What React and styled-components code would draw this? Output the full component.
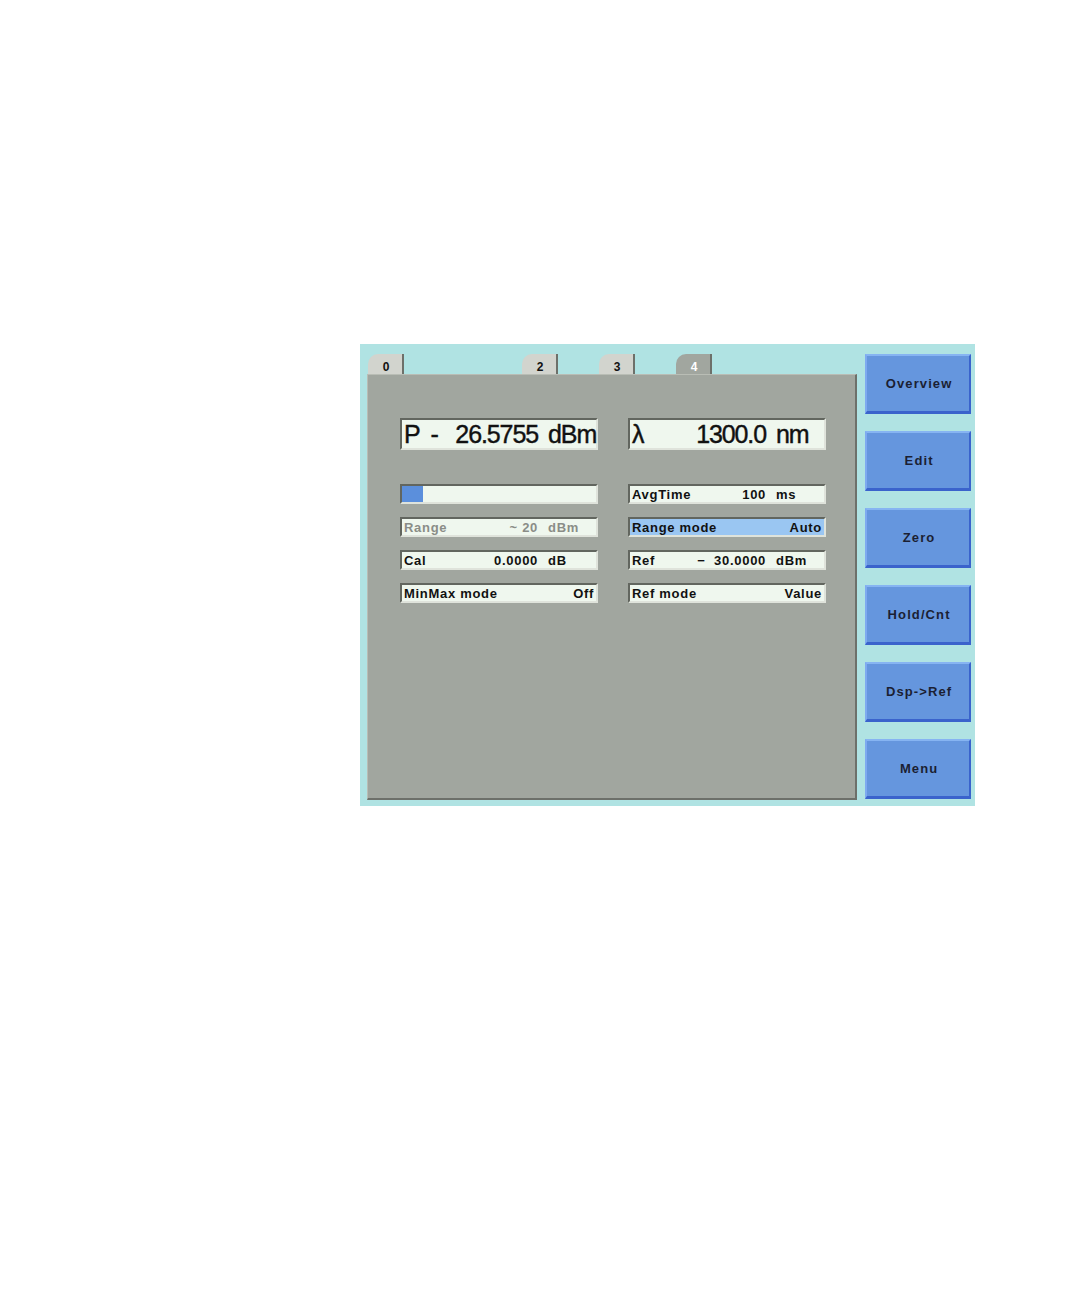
import React from 'react'
import styled, { createGlobalStyle } from 'styled-components'

const Global = createGlobalStyle`
    body {
        margin: 0;
        background: #ffffff;
        font-family: "Liberation Sans", Arial, sans-serif;
    }
`

const Screen = styled.div`
    margin: 344px 0 0 360px;
    width: 615px;
    height: 462px;
    box-sizing: border-box;
    padding: 10px 4px 6px 7px;
    background: #b0e3e3;
    display: flex;
    gap: 8px;
`
const Main = styled.div`
    width: 491px;
    display: flex;
    flex-direction: column;
`
const Tabs = styled.div`
    height: 20px;
    display: flex;
    gap: 41px;
    padding-left: 1px;
`
const Tab = styled.div`
    width: 36px;
    height: 20px;
    box-sizing: border-box;
    border-right: 2px solid #6d706a;
    border-top-left-radius: 10px;
    background: ${p => (p.$active ? '#a1a69f' : '#d2d4ce')};
    color: ${p => (p.$active ? '#ffffff' : '#111111')};
    visibility: ${p => (p.$hidden ? 'hidden' : 'visible')};
    font-size: 12px;
    font-weight: bold;
    display: flex;
    justify-content: center;
    align-items: center;
    padding: 6px 0 0 2px;
`
const Panel = styled.div`
    flex: 1;
    box-sizing: border-box;
    background: #a1a69f;
    border-style: solid;
    border-width: 1px 2px 2px 1px;
    border-color: #b9bdb5 #6d706a #6d706a #b9bdb5;
    padding: 43px 0 0 32px;
`
const Grid = styled.div`
    display: grid;
    grid-template-columns: 198px 198px;
    column-gap: 30px;
    row-gap: 13px;
    & + & {
        margin-top: 34px;
    }
`
const Field = styled.div`
    box-sizing: border-box;
    height: ${p => (p.$big ? '32px' : '20px')};
    border: 2px solid;
    border-color: #62665f #dfe3db #dfe3db #62665f;
    background: ${p => (p.$hl ? '#9ac6f2' : '#eff7ee')};
    color: ${p => (p.$off ? '#8a8d87' : '#111111')};
    font-size: ${p => (p.$big ? '25px' : '13px')};
    font-weight: ${p => (p.$big ? 'normal' : 'bold')};
    letter-spacing: ${p => (p.$big ? '-1.1px' : '0.7px')};
    -webkit-text-stroke: ${p => (p.$big ? '0.4px #111' : '0')};
    white-space: pre;
    display: grid;
    grid-template-columns: 1fr auto 48px;
    column-gap: 10px;
    align-items: center;
    padding-left: 2px;
    line-height: 1;
`
const Toggle = styled(Field)`
    display: flex;
    justify-content: space-between;
    padding-right: 2px;
`
const Num = styled.span`
    text-align: right;
`
const Bar = styled(Field)`
    display: block;
    padding: 0;
`
const Fill = styled.div`
    height: 100%;
    width: ${p => p.$pct}%;
    background: #5b8fdc;
`
const Keys = styled.div`
    width: 106px;
    display: flex;
    flex-direction: column;
    gap: 17px;
`
const Key = styled.button`
    height: 60px;
    box-sizing: border-box;
    background: #6596de;
    border-style: solid;
    border-width: 2px 2px 3px 2px;
    border-color: #86b4f2 #3a63cc #3a63cc #7eaaf0;
    color: #1b1f33;
    font-family: "Liberation Sans", Arial, sans-serif;
    font-size: 13px;
    font-weight: bold;
    letter-spacing: 1.1px;
    padding: 0 0 0 2px;
`

const Value = ({ label, num, unit, ...rest }) => (
    <Field {...rest}>
        <span>{label}</span>
        <Num>{num}</Num>
        <span>{unit}</span>
    </Field>
)

const App = () => {
    const keys = ['Overview', 'Edit', 'Zero', 'Hold/Cnt', 'Dsp->Ref', 'Menu']
    return (
        <>
            <Global />
            <Screen>
                <Main>
                    <Tabs>
                        <Tab>0</Tab>
                        <Tab $hidden>1</Tab>
                        <Tab>2</Tab>
                        <Tab>3</Tab>
                        <Tab $active>4</Tab>
                    </Tabs>
                    <Panel>
                        <Grid>
                            <Value $big label="P" num="-   26.5755" unit="dBm" />
                            <Value $big label="λ" num="1300.0" unit="nm" />
                        </Grid>
                        <Grid>
                            <Bar><Fill $pct={11} /></Bar>
                            <Value label="AvgTime" num="100" unit="ms" />
                            <Value $off label="Range" num="~ 20" unit="dBm" />
                            <Toggle $hl><span>Range mode</span><span>Auto</span></Toggle>
                            <Value label="Cal" num="0.0000" unit="dB" />
                            <Value label="Ref" num="−  30.0000" unit="dBm" />
                            <Toggle><span>MinMax mode</span><span>Off</span></Toggle>
                            <Toggle><span>Ref mode</span><span>Value</span></Toggle>
                        </Grid>
                    </Panel>
                </Main>
                <Keys>
                    {keys.map(k => <Key key={k}>{k}</Key>)}
                </Keys>
            </Screen>
        </>
    )
}

export default App
